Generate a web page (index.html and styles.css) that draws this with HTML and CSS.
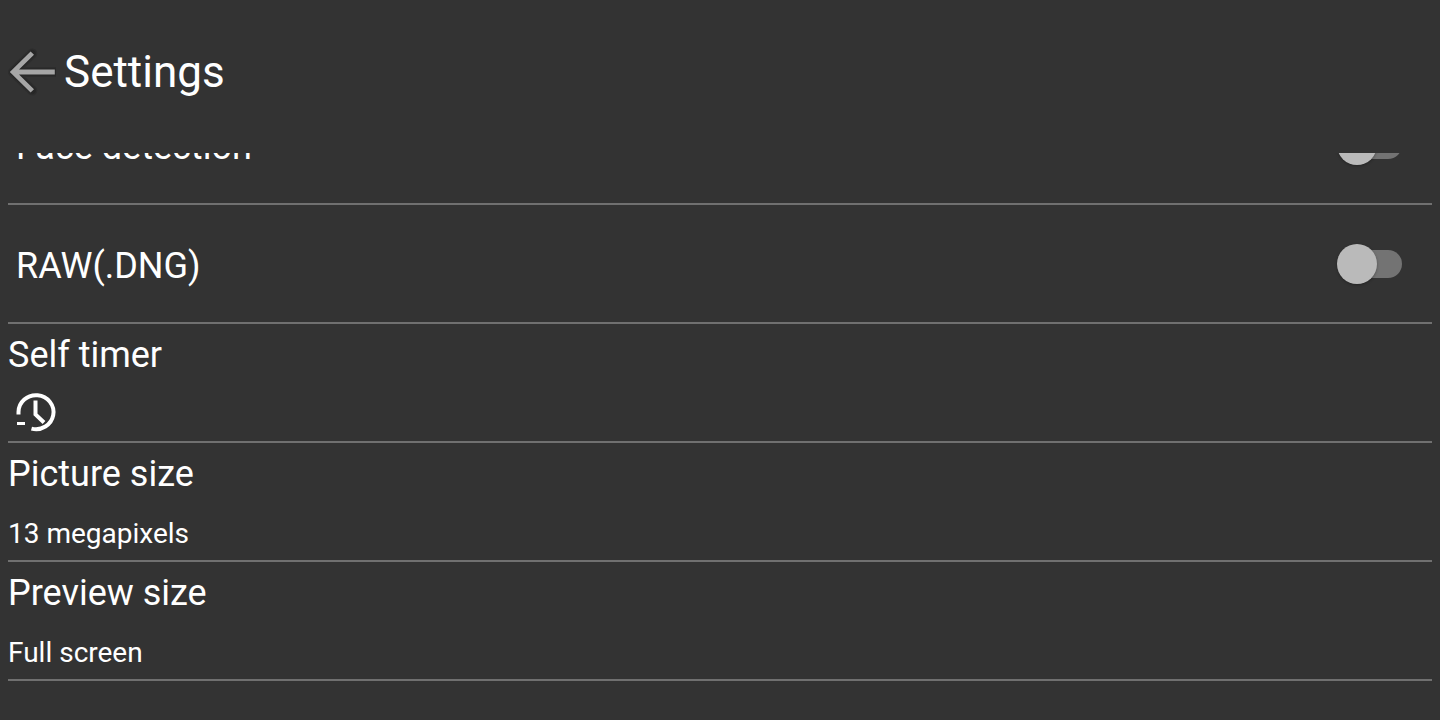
FILE: index.html
```html
<!DOCTYPE html>
<html lang="en">
<head>
<meta charset="utf-8">
<meta name="viewport" content="width=device-width, initial-scale=1">
<title>Settings</title>
<link rel="stylesheet" href="styles.css">
</head>
<body>
<div class="app">
  <header class="header">
    <button class="back" type="button" aria-label="Back">
      <svg viewBox="0 0 56 56" width="56" height="56" fill="none">
        <path class="arrow-halo" d="M32.300 9.500L13 28L32.300 46.500M13 28H54.500"/>
        <path class="arrow-edge" d="M32.300 9.500L13 28L32.300 46.500M13 28H54.500"/>
        <path class="arrow" d="M30.600 7.600L34 10.800L19 25.500H54.800V30.500H19L34 45.200L30.600 48.600L9.800 28Z"/>
      </svg>
    </button>
    <h1 class="title">Settings</h1>
  </header>
  <main class="viewport">
    <div class="list">
      <div class="row row-switch">
        <label class="name" for="face">Face detection</label>
        <input class="switch" type="checkbox" role="switch" id="face">
      </div>
      <div class="row row-switch">
        <label class="name" for="raw">RAW(.DNG)</label>
        <input class="switch" type="checkbox" role="switch" id="raw">
      </div>
      <button class="row row-option" type="button" aria-label="Self timer">
        <span class="name">Self timer</span>
        <svg class="timer" viewBox="0 0 56 42" width="56" height="42" fill="none" stroke="#fff">
          <path stroke-width="4" d="M10.500 23.500V21A17.500 17.000 0 1 1 23.500 37.600"/>
          <path stroke-width="4" d="M27.500 9.500V23.500L36 31.500"/>
          <path stroke-width="3" d="M9 32.500H17"/>
        </svg>
      </button>
      <button class="row row-option" type="button">
        <span class="name">Picture size</span>
        <span class="value">13 megapixels</span>
      </button>
      <button class="row row-option" type="button">
        <span class="name">Preview size</span>
        <span class="value">Full screen</span>
      </button>
    </div>
  </main>
</div>
</body>
</html>
```
FILE: styles.css
```css
* { box-sizing: border-box; }

body {
  margin: 0;
  background: #333;
  color: #fff;
  font-family: Roboto, sans-serif;
}

.app {
  display: flex;
  flex-direction: column;
  height: 100vh;
  padding: 0 8px;
}

.header {
  display: flex;
  align-items: center;
  flex: none;
  height: 153px;
  padding-bottom: 9px;
}

.back {
  display: flex;
  margin-left: -8px;
  padding: 0;
  border: 0;
  background: none;
}

.back svg { display: block; }

.arrow { fill: #a6a6a6; }
.arrow-edge { stroke: #272727; stroke-width: 7; stroke-linejoin: round; stroke-linecap: round; }
.arrow-halo { stroke: #2d2d2d; stroke-width: 10; stroke-linejoin: round; stroke-linecap: round; }

.title {
  margin: 0 0 0 8px;
  font-size: 44px;
  font-weight: 400;
  line-height: 52px;
}

.viewport {
  flex: 1;
  min-height: 0;
  overflow: hidden;
}

/* scrolled part-way into the first row */
.list {
  display: flex;
  flex-direction: column;
  margin-top: -67px;
}

.row {
  display: flex;
  min-height: 119px;
  border: 0;
  border-bottom: 2px solid #707070;
}

.row-switch {
  align-items: center;
  justify-content: space-between;
  padding: 0 30px 0 8px;
}

.row-switch .name { padding-top: 4px; }

.row-option {
  flex-direction: column;
  justify-content: space-between;
  align-items: flex-start;
  width: 100%;
  padding: 9px 0 8px;
  background: none;
  color: inherit;
  font-family: inherit;
  text-align: left;
}

.name { font-size: 36px; line-height: 44px; }

.value { font-size: 28px; line-height: 36px; }

.timer { flex: none; }

.switch {
  appearance: none;
  position: relative;
  width: 56px;
  height: 28px;
  margin: 0;
  border-radius: 14px;
  background: #737373;
}

.switch::before {
  content: "";
  position: absolute;
  top: -6px;
  left: -9px;
  width: 40px;
  height: 40px;
  border-radius: 50%;
  background: #bababa;
  box-shadow: 0 1px 3px rgba(0, 0, 0, 0.3);
}

.switch:checked::before { left: 25px; }
```
